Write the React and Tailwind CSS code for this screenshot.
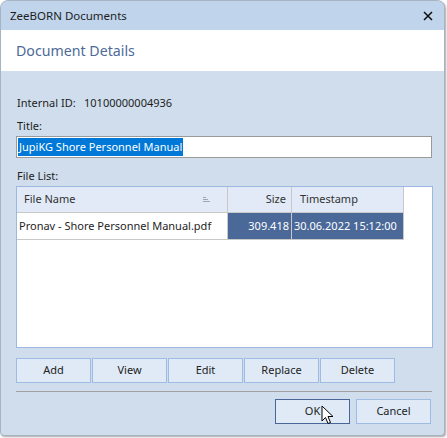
import React from 'react';

const font = { fontFamily: '"Noto Sans", "Open Sans", sans-serif' };

const ActionButton = ({ label, focused }) => (
  <button
    className={`h-[25px] w-[75px] text-[11px] text-[#222] bg-[#e0eaf6] border whitespace-nowrap ${
      focused ? 'border-[#4a6699]' : 'border-[#9dbbe3]'
    }`}
  >
    {label}
  </button>
);

const App = () => {
  return (
    <div className="w-[447px] h-[438px] bg-white" style={font}>
      <div className="w-[445px] h-[436px] rounded-t-lg rounded-b-sm border border-[#a9b4c2] bg-[#cfdded] shadow-[1px_1px_2px_rgba(0,0,0,0.35)] flex flex-col overflow-hidden">
        {/* Title bar */}
        <div className="h-[29px] bg-[#c0d4ec] flex items-center justify-between pl-[9px] pr-[11px]">
          <span className="text-[11.5px] text-[#1e1e1e]">ZeeBORN Documents</span>
          <svg width="10" height="10" viewBox="0 0 10 10">
            <path d="M1 1 L9 9 M9 1 L1 9" stroke="#111" strokeWidth="1.6" />
          </svg>
        </div>

        {/* Header */}
        <div className="h-[41px] bg-white flex items-center pl-[15px]">
          <span className="text-[14.2px] text-[#4d6a98]">Document Details</span>
        </div>

        {/* Body */}
        <div className="flex-1 flex flex-col px-[15px] pt-[22px] text-[11px] text-[#1e1e1e] whitespace-nowrap">
          <div className="flex items-center h-[20px]">
            <span className="w-[68px] shrink-0 pl-px">Internal ID:</span>
            <span>10100000004936</span>
          </div>

          <div className="mt-[4px] h-[19px] flex items-center pl-px">Title:</div>
          <div className="h-[22px] w-[416px] border border-[#9a9a9a] bg-white flex items-center px-px">
            <span className="bg-[#0078d7] text-white leading-[18px] px-px">JupiKG Shore Personnel Manual</span>
          </div>

          <div className="mt-[8px] h-[20px] flex items-center pl-px">File List:</div>
          <div className="h-[162px] w-[417px] border border-[#9cb8e0] bg-white">
            <div className="flex h-[26px] text-[#333]">
              <div className="w-[211px] bg-[#e1eaf6] border-r border-b border-[#c8c8c8] flex items-center justify-between pl-[7px] pr-[16px]">
                <span>File Name</span>
                <svg width="8" height="6" viewBox="0 0 8 6">
                  <path d="M0 0.5 H3 M0 2.5 H5 M0 4.5 H7" stroke="#9aa" strokeWidth="1" />
                </svg>
              </div>
              <div className="w-[64px] bg-[#e1eaf6] border-r border-b border-[#c8c8c8] flex items-center justify-end pr-[5px]">
                Size
              </div>
              <div className="w-[112px] bg-[#e1eaf6] border-r border-b border-[#c8c8c8] flex items-center pl-[8px]">
                Timestamp
              </div>
            </div>
            <div className="flex h-[27px]">
              <div className="w-[211px] border-r border-b border-[#c8c8c8] flex items-center pl-[2px] text-[#1e1e1e]">
                Pronav - Shore Personnel Manual.pdf
              </div>
              <div className="w-[64px] bg-[#4a6898] border-r border-b border-[#c8c8c8] flex items-center justify-end pr-[2px] text-white">
                309.418
              </div>
              <div className="w-[112px] bg-[#4a6898] border-r border-b border-[#c8c8c8] flex items-center pl-[2px] text-white">
                30.06.2022 15:12:00
              </div>
            </div>
          </div>

          <div className="mt-[10px] flex gap-[1px]">
            <ActionButton label="Add" />
            <ActionButton label="View" />
            <ActionButton label="Edit" />
            <ActionButton label="Replace" />
            <ActionButton label="Delete" />
          </div>

          <div className="mt-[8px] h-px w-[416px] bg-[#a0a0a0]" />

          <div className="mt-[7px] flex justify-end gap-[6px] pr-[1px] w-[416px]">
            <div className="relative">
              <ActionButton label="OK" focused />
              <svg className="absolute left-[46px] top-[6px]" width="14" height="20" viewBox="0 0 14 20">
                <path d="M1 1 L1 16 L4.5 12.5 L7 18.5 L9.5 17.5 L7 11.5 L12 11.5 Z" fill="#fff" stroke="#000" strokeWidth="1" strokeLinejoin="round" />
              </svg>
            </div>
            <ActionButton label="Cancel" />
          </div>
        </div>
      </div>
    </div>
  );
};

export default App;
